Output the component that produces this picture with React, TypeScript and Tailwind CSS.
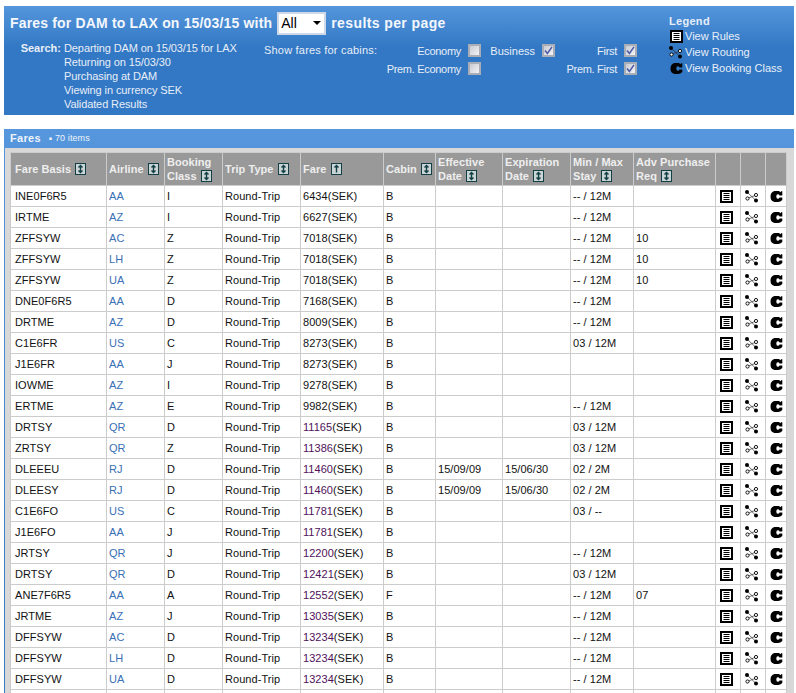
const rows: [string, string, string, string, string, string, string, string, string][] = [
  ["INE0F6R5", "AA", "I", "6434", "B", "", "", "-- / 12M", ""],
  ["IRTME", "AZ", "I", "6627", "B", "", "", "-- / 12M", ""],
  ["ZFFSYW", "AC", "Z", "7018", "B", "", "", "-- / 12M", "10"],
  ["ZFFSYW", "LH", "Z", "7018", "B", "", "", "-- / 12M", "10"],
  ["ZFFSYW", "UA", "Z", "7018", "B", "", "", "-- / 12M", "10"],
  ["DNE0F6R5", "AA", "D", "7168", "B", "", "", "-- / 12M", ""],
  ["DRTME", "AZ", "D", "8009", "B", "", "", "-- / 12M", ""],
  ["C1E6FR", "US", "C", "8273", "B", "", "", "03 / 12M", ""],
  ["J1E6FR", "AA", "J", "8273", "B", "", "", "", ""],
  ["IOWME", "AZ", "I", "9278", "B", "", "", "", ""],
  ["ERTME", "AZ", "E", "9982", "B", "", "", "-- / 12M", ""],
  ["DRTSY", "QR", "D", "11165", "B", "", "", "03 / 12M", ""],
  ["ZRTSY", "QR", "Z", "11386", "B", "", "", "03 / 12M", ""],
  ["DLEEEU", "RJ", "D", "11460", "B", "15/09/09", "15/06/30", "02 / 2M", ""],
  ["DLEESY", "RJ", "D", "11460", "B", "15/09/09", "15/06/30", "02 / 2M", ""],
  ["C1E6FO", "US", "C", "11781", "B", "", "", "03 / --", ""],
  ["J1E6FO", "AA", "J", "11781", "B", "", "", "", ""],
  ["JRTSY", "QR", "J", "12200", "B", "", "", "-- / 12M", ""],
  ["DRTSY", "QR", "D", "12421", "B", "", "", "03 / 12M", ""],
  ["ANE7F6R5", "AA", "A", "12552", "F", "", "", "-- / 12M", "07"],
  ["JRTME", "AZ", "J", "13035", "B", "", "", "-- / 12M", ""],
  ["DFFSYW", "AC", "D", "13234", "B", "", "", "-- / 12M", ""],
  ["DFFSYW", "LH", "D", "13234", "B", "", "", "-- / 12M", ""],
  ["DFFSYW", "UA", "D", "13234", "B", "", "", "-- / 12M", ""],
];

function RulesIcon() {
  return (
    <svg width="13" height="13" viewBox="0 0 13 13" className="block">
      <rect x="1" y="1" width="11" height="11" fill="#fff" stroke="#000" strokeWidth="2" />
      <path d="M3.5 3.5h6M3.5 5.5h6M3.5 7.5h6M3.5 9.5h6" stroke="#000" strokeWidth="1" />
    </svg>
  );
}

function RoutingIcon() {
  return (
    <svg width="14" height="13" viewBox="0 0 14 13" className="block">
      <path d="M2 2L11 10.5M2.5 8.5L11 5" stroke="#333" strokeWidth="0.7" fill="none" />
      <circle cx="2" cy="2" r="2" fill="#000" />
      <circle cx="2.5" cy="8.5" r="1.6" fill="#fff" stroke="#000" strokeWidth="0.9" />
      <circle cx="11" cy="5" r="1.6" fill="#fff" stroke="#000" strokeWidth="0.9" />
      <circle cx="11" cy="10.5" r="2" fill="#000" />
    </svg>
  );
}

function ClassIcon() {
  return (
    <svg width="13" height="13" viewBox="0 0 13 13" className="block">
      <path
        d="M4.5 1H9L10.5 2.2L11 1.2H12.3V5.4H9.6Q9 4.2 7.8 4.2Q6.3 4.2 6.3 6.5Q6.3 8.8 7.8 8.8Q9 8.8 9.6 7.6H12.3V10Q10.5 12 8 12H4.5Q0.5 11 0.5 6.5Q0.5 2 4.5 1Z"
        fill="#000"
      />
    </svg>
  );
}

function Sort({ up = false }: { up?: boolean }) {
  return (
    <svg width="11" height="12" viewBox="0 0 11 12" className="inline-block align-[-2px] ml-[1px]">
      <rect x="0.5" y="0.5" width="10" height="11" fill="#c9d4d4" stroke="#143f46" />
      {up ? (
        <path d="M5.5 2.5v7M3.5 4.5l2-2 2 2" stroke="#143f46" strokeWidth="1.4" fill="none" />
      ) : (
        <path d="M5.5 3v6M3.5 4.5l2-2 2 2M3.5 7.5l2 2 2-2" stroke="#143f46" strokeWidth="1.4" fill="none" />
      )}
    </svg>
  );
}

function Check({ on = false }: { on?: boolean }) {
  return (
    <span className="inline-flex h-[13px] w-[13px] shrink-0 items-center justify-center border-2 border-[#a9aeb6] bg-[linear-gradient(135deg,#c8cbd2,#f4f4f6)]">
      {on && (
        <svg width="9" height="9" viewBox="0 0 9 9" className="block">
          <path d="M1 4.5L3.4 7.5L8 0.8" stroke="#4a5aa8" strokeWidth="1.5" fill="none" />
        </svg>
      )}
    </span>
  );
}

function Th({ children, className = "" }: { children?: React.ReactNode; className?: string }) {
  return (
    <th className={`whitespace-nowrap border border-[#cccccc] bg-[#999999] pr-0 text-left align-middle text-[11px] font-bold leading-[14px] tracking-[0.05px] text-[#eeeeee] ${className || "pl-[2px]"}`}>
      {children}
    </th>
  );
}

function Td({ children, className = "" }: { children?: React.ReactNode; className?: string }) {
  return (
    <td className={`h-[21px] whitespace-nowrap border border-[#cccccc] bg-white py-0 pr-0 align-middle text-[11px] leading-[14px] tracking-[0.05px] text-[#111111] ${className || "pl-[2px]"}`}>
      {children}
    </td>
  );
}

const widths = [96, 58, 58, 78, 83, 52, 67, 68, 63, 82, 25, 25, 21];

const cabin = "flex h-[13px] items-center justify-end gap-[7px] whitespace-nowrap tracking-[-0.3px]";
const cabinWide = "flex h-[13px] items-center justify-end gap-[7px] whitespace-nowrap";

export default function App() {
  return (
    <div className="h-[693px] overflow-hidden bg-white pl-[4px] pr-[2px] pt-[6px] font-['Liberation_Sans',Arial,sans-serif]">
      <section className="flex h-[109px] bg-[linear-gradient(#5596dc,#3278c4_38%,#3278c4)] text-[11px] leading-[14px] text-[#e8eef8]">
        <div className="w-[660px] shrink-0">
          <div className="flex h-[29px] items-end pl-[6px]">
            <h1 className="mb-[2px] text-[14px] font-bold leading-[20px] tracking-[0.17px] text-[#f4f7fc]">
              Fares for DAM to LAX on 15/03/15 with
            </h1>
            <div className="relative mx-[5px] h-[23px] w-[49px] border-2 border-[#cfd8e6] bg-white pl-[2px] text-[14px] leading-[19px] text-black">
              All
              <span className="absolute right-[3px] top-[7px] h-0 w-0 border-x-[4px] border-t-[4px] border-x-transparent border-t-black" />
            </div>
            <span className="mb-[2px] text-[14px] font-bold leading-[20px] tracking-[0.4px] text-[#f4f7fc]">results per page</span>
          </div>
          <div className="mt-[6px] flex">
            <span className="w-[57px] shrink-0 text-right font-bold">Search:</span>
            <div className="ml-[3px] w-[200px] shrink-0 tracking-[-0.1px]">
              <div>Departing DAM on 15/03/15 for LAX</div>
              <div>Returning on 15/03/30</div>
              <div>Purchasing at DAM</div>
              <div>Viewing in currency SEK</div>
              <div>Validated Results</div>
            </div>
            <div className="w-[120px] whitespace-nowrap pt-[2px] tracking-[0.2px]">Show fares for cabins:</div>
            <div className="mt-[3px] grid h-fit grid-cols-[97px_74px_82px] gap-y-[5px]">
              <div className={cabin}>Economy <Check /></div>
              <div className={cabinWide}>Business <Check on /></div>
              <div className={cabin}>First <Check on /></div>
              <div className={cabin}>Prem. Economy <Check /></div>
              <div />
              <div className={cabin}>Prem. First <Check on /></div>
            </div>
          </div>
        </div>
        <aside className="pl-[5px] pt-[8px]">
          <div className="font-bold tracking-[0.3px]">Legend</div>
          <div className="flex h-[16px] items-center gap-[2px] pl-[1px]"><RulesIcon /><span>View Rules</span></div>
          <div className="flex h-[16px] items-center gap-[2px]"><RoutingIcon /><span>View Routing</span></div>
          <div className="flex h-[16px] items-center gap-[2px] pl-[1px]"><ClassIcon /><span>View Booking Class</span></div>
        </aside>
      </section>

      <section className="mt-[14px] bg-[linear-gradient(#5596dc,#3278c4)]">
        <div className="flex h-[19px] items-center pl-[6px] text-[11px] font-bold tracking-[0.3px] text-[#eef3fb]">
          Fares
          <span className="ml-[8px] text-[9px] font-normal tracking-[0.1px]">
            <span className="mr-[3px] text-[5px] align-[1px]">■</span>70 items
          </span>
        </div>
        <div className="ml-[1px] bg-[#d8d8d8] pb-[4px] pl-[5px] pr-[7px] pt-[4px]">
          <table className="w-[777px] table-fixed border-collapse">
            <colgroup>
              {widths.map((w, i) => (
                <col key={i} style={{ width: w }} />
              ))}
            </colgroup>
            <thead>
              <tr className="h-[33px]">
                <Th className="pl-[4px]">Fare Basis <Sort /></Th>
                <Th>Airline <Sort /></Th>
                <Th>Booking<br />Class <Sort /></Th>
                <Th>Trip Type <Sort /></Th>
                <Th>Fare <Sort up /></Th>
                <Th>Cabin <Sort /></Th>
                <Th>Effective<br />Date <Sort /></Th>
                <Th>Expiration<br />Date <Sort /></Th>
                <Th>Min / Max<br />Stay <Sort /></Th>
                <Th>Adv Purchase<br />Req <Sort /></Th>
                <Th />
                <Th />
                <Th />
              </tr>
            </thead>
            <tbody>
              {rows.map((r, i) => (
                <tr key={i}>
                  <Td className="pl-[4px]">{r[0]}</Td>
                  <Td><span className="text-[#3a70b5]">{r[1]}</span></Td>
                  <Td>{r[2]}</Td>
                  <Td>Round-Trip</Td>
                  <Td>
                    <span className={r[3].length > 4 ? "text-[#50105a]" : ""}>{r[3]}</span>(SEK)
                  </Td>
                  <Td>{r[4]}</Td>
                  <Td>{r[5]}</Td>
                  <Td>{r[6]}</Td>
                  <Td>{r[7]}</Td>
                  <Td>{r[8]}</Td>
                  <Td className="pl-[4px]"><RulesIcon /></Td>
                  <Td className="pl-[4px]"><RoutingIcon /></Td>
                  <Td className="pl-[4px]"><ClassIcon /></Td>
                </tr>
              ))}
              <tr>
                {widths.map((_, i) => (
                  <Td key={i} />
                ))}
              </tr>
            </tbody>
          </table>
        </div>
      </section>
    </div>
  );
}
